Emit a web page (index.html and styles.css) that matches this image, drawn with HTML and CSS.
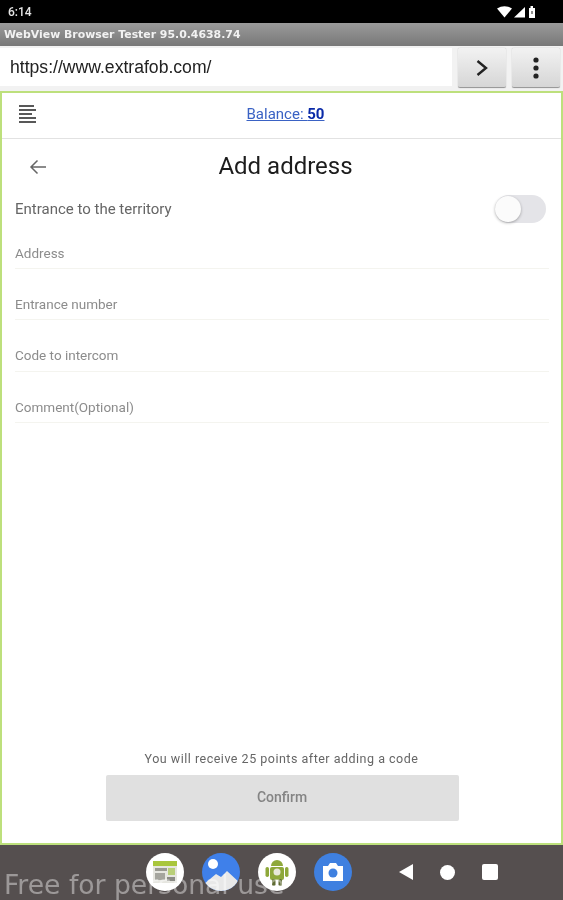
FILE: index.html
```html
<!DOCTYPE html>
<html lang="en">
<head>
    <meta charset="UTF-8">
    <meta name="viewport" content="width=device-width, initial-scale=1.0">
    <title>Add address</title>
    <link rel="stylesheet" href="styles.css">
</head>
<body>
    <div class="screen">
        <div class="status-bar">
            <span class="status-time">6:14</span>
            <svg class="status-icons" width="40" height="14" viewBox="0 0 40 14">
                <path d="M0 3.5 Q7.5 -1 15 3.5 L7.5 12.5 Z" fill="#fff"/>
                <path d="M17 12.5 L28 2 V12.5 Z" fill="#fff"/>
                <path d="M32 3 H33.5 V1 H36 V3 H38 V13 H32 Z" fill="#fff"/>
                <rect x="34.2" y="6" width="1.6" height="3" fill="#777"/>
            </svg>
        </div>
        <div class="title-bar">WebView Browser Tester 95.0.4638.74</div>
        <div class="url-row">
            <div class="url-box">https://www.extrafob.com/</div>
            <div class="url-btn">
                <svg width="14" height="18" viewBox="0 0 14 18"><path d="M2.5 2 L11 9 L2.5 16" fill="none" stroke="#222" stroke-width="2.4"/></svg>
            </div>
            <div class="url-btn">
                <svg width="8" height="24" viewBox="0 0 8 24"><circle cx="4" cy="4" r="2.6" fill="#222"/><circle cx="4" cy="12" r="2.6" fill="#222"/><circle cx="4" cy="20" r="2.6" fill="#222"/></svg>
            </div>
        </div>

        <div class="webview">
            <div class="top-bar">
                <svg class="menu-icon" width="17" height="18" viewBox="0 0 17 18">
                    <path d="M0 1 H15 M0 5 H17 M0 9 H13 M0 13 H17 M0 17 H17" stroke="#222" stroke-width="1.6"/>
                </svg>
                <a class="balance" href="#">Balance: <b>50</b></a>
            </div>

            <div class="page-head">
                <svg class="back-icon" width="18" height="16" viewBox="0 0 18 16"><path d="M17 8 H2 M8.5 1.5 L2 8 L8.5 14.5" fill="none" stroke="#666" stroke-width="1.5"/></svg>
                <h1 class="page-title">Add address</h1>
            </div>

            <div class="form">
                <div class="toggle-row">
                    <span class="toggle-label">Entrance to the territory</span>
                    <div class="toggle"><div class="toggle-knob"></div></div>
                </div>
                <div class="field">Address</div>
                <div class="field">Entrance number</div>
                <div class="field">Code to intercom</div>
                <div class="field">Comment(Optional)</div>
            </div>

            <div class="bottom">
                <p class="hint">You will receive 25 points after adding a code</p>
                <div class="confirm-btn">Confirm</div>
            </div>
        </div>

        <div class="nav-bar">
            <div class="dock">
                <div class="app app-white">
                    <svg width="26" height="26" viewBox="0 0 26 26">
                        <rect x="1" y="2" width="24" height="22" fill="#e6e6e0"/>
                        <rect x="1" y="2" width="24" height="5" fill="#a9c63c"/>
                        <rect x="3" y="9" width="12" height="3" fill="#9a9a92"/>
                        <rect x="16" y="9" width="7" height="7" fill="#b9cf78"/>
                        <rect x="3" y="14" width="10" height="7" fill="#a5a59e"/>
                        <rect x="15" y="18" width="8" height="4" fill="#8b8b85"/>
                    </svg>
                </div>
                <div class="app app-photos">
                    <svg width="38" height="38" viewBox="0 0 38 38">
                        <circle cx="11" cy="11" r="5" fill="#fff"/>
                        <path d="M2 31 L14 21 L19 24 L25 18 L38 30 L30 38 H8 Z" fill="#e8e8e8"/>
                    </svg>
                </div>
                <div class="app app-white">
                    <svg width="24" height="30" viewBox="0 0 24 30">
                        <path d="M6 9 A6 6 0 0 1 18 9 Z" fill="#8ea83a"/>
                        <rect x="5" y="10" width="14" height="13" rx="2" fill="#8ea83a"/>
                        <rect x="0.5" y="10" width="3.5" height="10" rx="1.7" fill="#8ea83a"/>
                        <rect x="20" y="10" width="3.5" height="10" rx="1.7" fill="#8ea83a"/>
                        <rect x="7" y="22" width="3.5" height="7" rx="1.5" fill="#5f6b33"/>
                        <rect x="13.5" y="22" width="3.5" height="7" rx="1.5" fill="#5f6b33"/>
                        <circle cx="12" cy="15" r="3.5" fill="#e8e8d8"/>
                    </svg>
                </div>
                <div class="app app-camera">
                    <svg width="22" height="20" viewBox="0 0 22 20">
                        <path d="M1 4 H6 L8 1 H14 L16 4 H21 V19 H1 Z" fill="#fff"/>
                        <circle cx="11" cy="11" r="4.5" fill="#3f80e0"/>
                    </svg>
                </div>
            </div>
            <div class="sys-btns">
                <svg width="14" height="16" viewBox="0 0 14 16"><path d="M14 0 V16 L0 8 Z" fill="#fff"/></svg>
                <div class="sys-home"></div>
                <div class="sys-recent"></div>
            </div>
            <div class="watermark">Free for personal use</div>
        </div>
    </div>
</body>
</html>
```

FILE: styles.css
```css
* {
    margin: 0;
    padding: 0;
    box-sizing: border-box;
}

html, body {
    width: 563px;
    height: 900px;
    overflow: hidden;
}

body {
    font-family: Roboto, sans-serif;
    background: #fff;
}

.screen {
    display: flex;
    flex-direction: column;
    height: 900px;
    filter: blur(0.6px);
}

.status-bar {
    height: 23px;
    background: #000;
    color: #e6e6e6;
    display: flex;
    align-items: center;
    justify-content: space-between;
    padding: 1px 26px 0 8px;
}

.status-time {
    font-size: 12px;
    font-weight: 500;
}

.title-bar {
    height: 23px;
    background: linear-gradient(180deg, #9a9a9a, #787878);
    color: #f2f2f2;
    font-family: "DejaVu Sans", sans-serif;
    font-size: 10.9px;
    font-weight: 700;
    line-height: 23px;
    padding-left: 4px;
    white-space: nowrap;
}

.url-row {
    height: 45px;
    background: #f2f2f2;
    display: flex;
    align-items: flex-start;
    gap: 6px;
    padding-top: 2px;
}

.url-box {
    width: 452px;
    height: 38px;
    background: #fff;
    font-family: "Liberation Sans", sans-serif;
    font-size: 17.6px;
    line-height: 38px;
    padding-left: 10px;
    color: #222;
}

.url-btn {
    width: 48px;
    height: 40px;
    background: linear-gradient(180deg, #f2f2f2, #d6d6d6);
    border-radius: 2px;
    border-bottom: 1px solid #9a9a9a;
    box-shadow: 0 0 1px #999;
    display: flex;
    align-items: center;
    justify-content: center;
}

.webview {
    flex: 1;
    display: flex;
    flex-direction: column;
    border: 2px solid #bde07c;
    background: #fff;
}

.top-bar {
    height: 46px;
    border-bottom: 1px solid #e2e2e2;
    display: flex;
    align-items: center;
    justify-content: center;
    padding: 0 0 3px 8px;
    position: relative;
}

.menu-icon {
    position: absolute;
    left: 17px;
    top: 12px;
}

.balance {
    font-size: 15px;
    color: #3a62c4;
    text-decoration: underline;
}

.balance b {
    color: #0a2aa8;
    font-weight: 700;
}

.page-head {
    height: 54px;
    display: flex;
    align-items: center;
    justify-content: center;
    padding-left: 8px;
    position: relative;
}

.back-icon {
    position: absolute;
    left: 27px;
    top: 20px;
}

.page-title {
    font-size: 24px;
    font-weight: 400;
    color: #1c1c1c;
}

.form {
    padding: 0 12px 0 13px;
}

.toggle-row {
    height: 32px;
    display: flex;
    align-items: center;
    justify-content: space-between;
}

.toggle-label {
    font-size: 15px;
    color: #666;
}

.toggle {
    width: 51px;
    height: 28px;
    border-radius: 14px;
    background: #e4e4e8;
    position: relative;
    margin-right: 3px;
}

.toggle-knob {
    position: absolute;
    left: 0;
    top: 1px;
    width: 26px;
    height: 26px;
    border-radius: 50%;
    background: #fbfbfb;
    box-shadow: 0 1px 3px rgba(0, 0, 0, 0.3);
}

.field {
    height: 51.5px;
    border-bottom: 1px solid #f4f4ef;
    font-size: 13.5px;
    color: #8c8c8c;
    padding-top: 28px;
    line-height: 14px;
}

.toggle-row + .field {
    height: 43.5px;
    padding-top: 21px;
}

.bottom {
    margin-top: auto;
    display: flex;
    flex-direction: column;
    align-items: center;
    padding-bottom: 22px;
}

.hint {
    font-size: 12.5px;
    letter-spacing: 0.5px;
    color: #666;
    line-height: 14px;
    margin-bottom: 9px;
}

.confirm-btn {
    width: 353px;
    height: 46px;
    margin-left: 1px;
    background: #e0e0e0;
    border-radius: 2px;
    color: #848484;
    font-size: 14px;
    font-weight: 500;
    line-height: 44px;
    text-align: center;
}

.nav-bar {
    height: 55px;
    background: #554f4f;
    display: flex;
    align-items: flex-start;
    padding-top: 8px;
    position: relative;
    overflow: hidden;
}

.dock {
    display: flex;
    gap: 18px;
    margin-left: 146px;
}

.app {
    width: 38px;
    height: 38px;
    border-radius: 50%;
    display: flex;
    align-items: center;
    justify-content: center;
    overflow: hidden;
}

.app-white {
    background: #fff;
}

.app-photos {
    background: #3f80ea;
}

.app-camera {
    background: #3f80e0;
}

.sys-btns {
    display: flex;
    align-items: center;
    gap: 27px;
    margin-left: 47px;
    height: 38px;
}

.sys-home {
    width: 15px;
    height: 15px;
    border-radius: 50%;
    background: #fff;
}

.sys-recent {
    width: 16px;
    height: 16px;
    border-radius: 2px;
    background: #fff;
}

.watermark {
    position: absolute;
    left: 4px;
    bottom: 0;
    font-family: "DejaVu Sans", sans-serif;
    font-size: 26.6px;
    line-height: 31px;
    color: rgba(255, 255, 255, 0.42);
    white-space: nowrap;
}
```
